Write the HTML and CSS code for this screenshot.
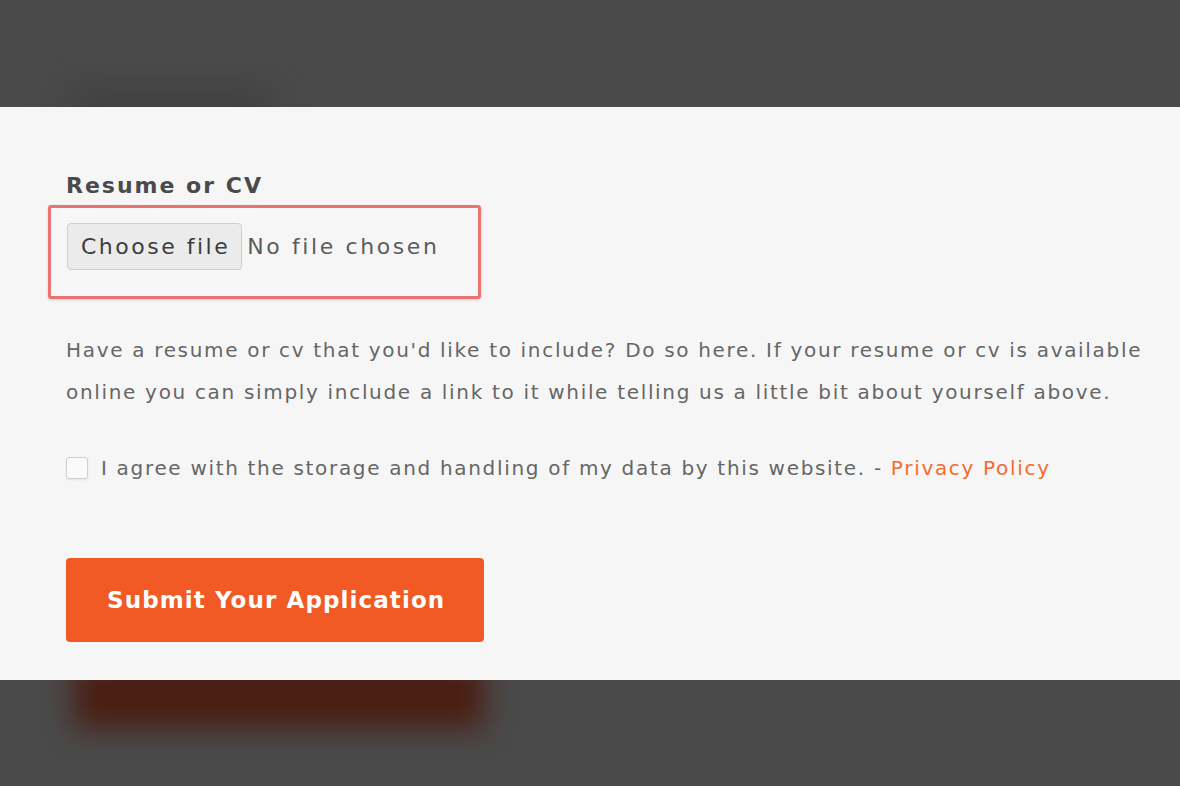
FILE: index.html
```html
<!DOCTYPE html>
<html lang="en">
<head>
<meta charset="utf-8">
<title>Resume or CV</title>
<link rel="stylesheet" href="styles.css">
</head>
<body>
<div class="top"><div class="top-glow"></div></div>
<main class="panel">
  <div class="label">Resume or CV</div>
  <div class="file-box">
    <span class="file-btn">Choose file</span>
    <span class="file-none">No file chosen</span>
  </div>
  <p class="help">Have a resume or cv that you'd like to include? Do so here. If your resume or cv is available online you can simply include a link to it while telling us a little bit about yourself above.</p>
  <label class="agree">
    <span class="check"></span>
    <span class="agree-text">I agree with the storage and handling of my data by this website. - <a class="privacy">Privacy Policy</a></span>
  </label>
  <button class="submit">Submit Your Application</button>
</main>
<div class="bottom"><div class="glow"></div></div>
</body>
</html>
```
FILE: styles.css
```css
html, body {
  margin: 0;
  padding: 0;
  background: #4a4a4a;
  overflow: hidden;
}
body {
  font-family: "DejaVu Sans", "Open Sans", sans-serif;
  width: 1180px;
  height: 786px;
}
.top {
  height: 107px;
  background: #4a4a4a;
  overflow: hidden;
  display: flex;
  align-items: flex-end;
  padding-left: 70px;
  box-sizing: border-box;
}
.top-glow {
  width: 200px;
  height: 30px;
  margin-bottom: -14px;
  background: #413d3d;
  filter: blur(16px);
}
.panel {
  height: 573px;
  box-sizing: border-box;
  background: #f6f6f6;
  padding: 66px 0 0 66px;
  display: flex;
  flex-direction: column;
  align-items: flex-start;
}
.label {
  font-size: 22px;
  font-weight: 700;
  line-height: 26px;
  color: #4a4a4a;
  letter-spacing: 2px;
}
.file-box {
  margin: 6px 0 0 -18px;
  width: 433px;
  height: 94px;
  box-sizing: border-box;
  border: 3px solid #ec7272;
  border-radius: 3px;
  padding: 15px 0 0 16px;
  display: flex;
  align-items: flex-start;
  gap: 5px;
  box-shadow: 0 1px 3px rgba(0,0,0,0.15);
}
.file-btn {
  display: flex;
  align-items: center;
  height: 47px;
  box-sizing: border-box;
  padding: 0 11px 0 13px;
  background: #ebebeb;
  border: 1px solid #cfcfcf;
  border-radius: 4px;
  font-size: 22px;
  letter-spacing: 2.5px;
  color: #3c3c3c;
}
.file-none {
  line-height: 47px;
  font-size: 22px;
  letter-spacing: 2.6px;
  color: #5c5c5c;
}
.help {
  margin: 30px 0 0 0;
  width: 1095px;
  font-size: 20px;
  line-height: 42px;
  letter-spacing: 1.68px;
  color: #666;
}
.agree {
  margin-top: 40px;
  display: flex;
  align-items: center;
  gap: 13px;
  font-size: 20px;
  line-height: 30px;
  letter-spacing: 1.68px;
  color: #666;
}
.check {
  width: 22px;
  height: 22px;
  box-sizing: border-box;
  border: 1px solid #cfcfcf;
  border-radius: 3px;
  background: #fafafa;
  box-shadow: 0 1px 2px rgba(0,0,0,0.08);
}
.privacy {
  color: #f36c2f;
}
.submit {
  margin-top: 75px;
  width: 418px;
  height: 84px;
  border: none;
  border-radius: 4px;
  background: #f15a24;
  color: #fff;
  font-family: inherit;
  font-size: 23px;
  font-weight: 700;
  text-align: left;
  padding: 0 0 0 41px;
  letter-spacing: 1.1px;
}
.bottom {
  height: 106px;
  background: #4a4a4a;
  overflow: hidden;
  padding: 0 0 0 74px;
}
.glow {
  width: 410px;
  height: 66px;
  margin-top: -18px;
  background: #4a1d12;
  filter: blur(15px);
}
```
